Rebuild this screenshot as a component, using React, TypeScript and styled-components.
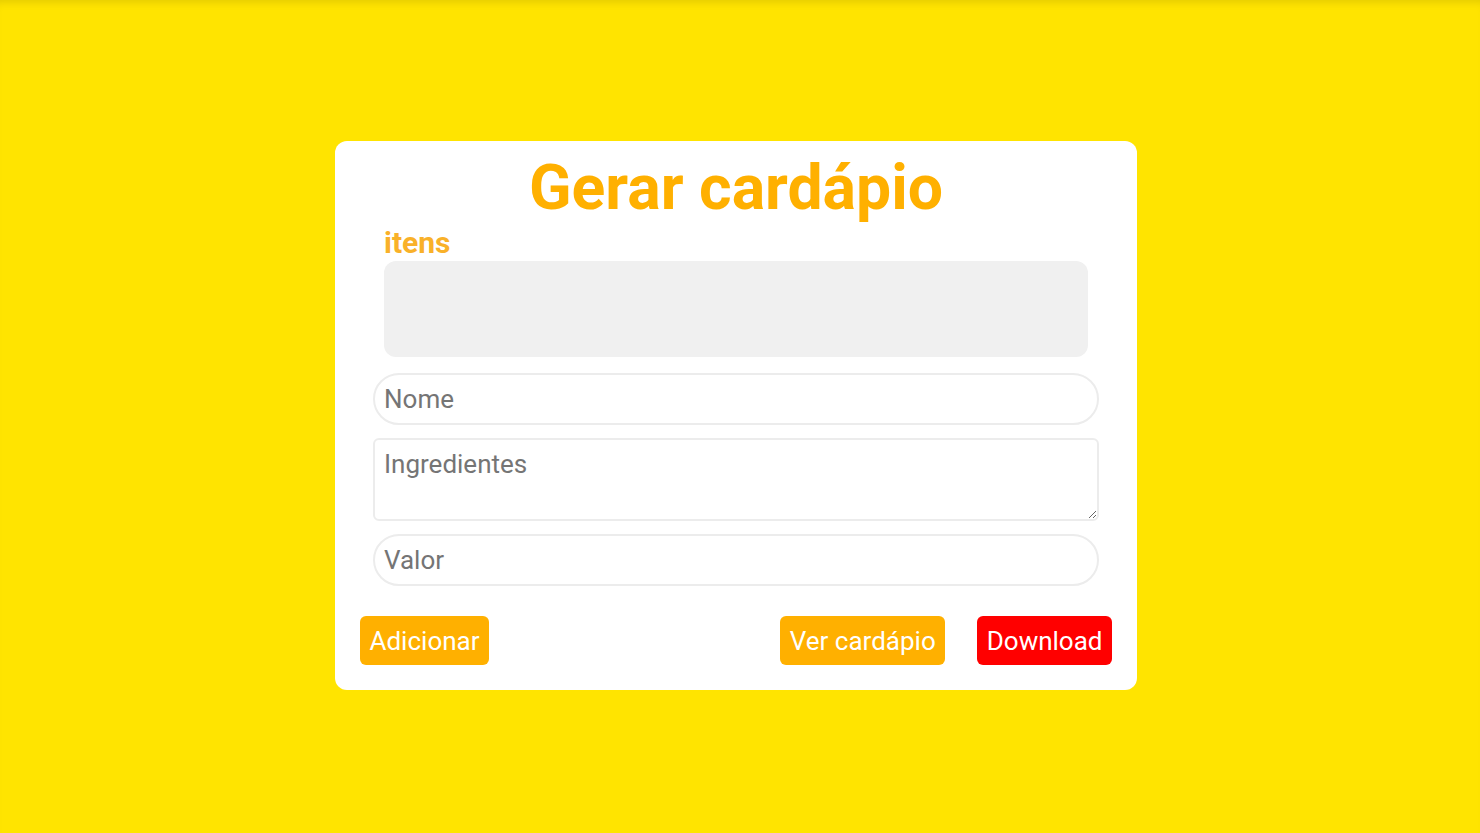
import styled, { createGlobalStyle } from "styled-components";

const GlobalStyle = createGlobalStyle`
  * {
    box-sizing: border-box;
  }
  body {
    margin: 0;
    font-family: Roboto, "Liberation Sans", sans-serif;
  }
`;

const Page = styled.main`
  min-height: 100vh;
  background-color: #ffe400;
  box-shadow: inset 0 8px 8px -6px rgba(0, 0, 0, 0.12);
  display: flex;
  justify-content: center;
  align-items: center;
  padding: 0 8px 2px 0;
`;

const Card = styled.section`
  width: 802px;
  background-color: #fff;
  border-radius: 12px;
  padding: 9px 25px 25px;
  display: flex;
  flex-direction: column;
`;

const Title = styled.h1`
  margin: 0;
  font-size: 62.5px;
  line-height: 75px;
  font-weight: 700;
  color: #ffb000;
  text-align: center;
`;

const Form = styled.div`
  display: flex;
  flex-direction: column;
  padding: 0 13px;
`;

const Label = styled.h2`
  margin: 0;
  padding-left: 11px;
  font-size: 30px;
  line-height: 36px;
  font-weight: 700;
  color: #f9b129;
`;

const ItemList = styled.div`
  margin: 0 11px 16px;
  height: 96px;
  background-color: #f0f0f0;
  border-radius: 12px;
`;

const Field = styled.input`
  width: 100%;
  height: 52px;
  margin-bottom: 13px;
  padding: 0 9px;
  border: 2px solid #ececec;
  border-radius: 26px;
  font-family: Roboto, "Liberation Sans", sans-serif;
  font-size: 26px;
  color: #333;
  outline: none;
  &::placeholder {
    color: #757575;
  }
`;

const TextArea = styled.textarea`
  display: block;
  width: 100%;
  height: 83px;
  margin: 0 0 13px;
  padding: 9px 9px;
  border: 2px solid #ececec;
  border-radius: 6px;
  font-family: Roboto, "Liberation Sans", sans-serif;
  font-size: 26px;
  line-height: 30px;
  color: #333;
  outline: none;
  &::placeholder {
    color: #757575;
  }
`;

const Actions = styled.div`
  display: flex;
  align-items: center;
  gap: 32px;
  margin-top: 17px;
`;

const Spacer = styled.div`
  flex: 1;
`;

const Button = styled.button<{ $danger?: boolean }>`
  height: 49px;
  padding: 0 9.5px;
  border: none;
  border-radius: 6px;
  background-color: ${(props) => (props.$danger ? "#ff0000" : "#ffb000")};
  color: #fff;
  font-family: Roboto, "Liberation Sans", sans-serif;
  font-size: 26px;
  cursor: pointer;
`;

export default function App() {
  return (
    <>
      <GlobalStyle />
      <Page>
        <Card>
          <Title>Gerar cardápio</Title>
          <Form>
            <Label>itens</Label>
            <ItemList />
            <Field type="text" placeholder="Nome" />
            <TextArea placeholder="Ingredientes" />
            <Field type="text" placeholder="Valor" />
          </Form>
          <Actions>
            <Button>Adicionar</Button>
            <Spacer />
            <Button>Ver cardápio</Button>
            <Button $danger>Download</Button>
          </Actions>
        </Card>
      </Page>
    </>
  );
}
